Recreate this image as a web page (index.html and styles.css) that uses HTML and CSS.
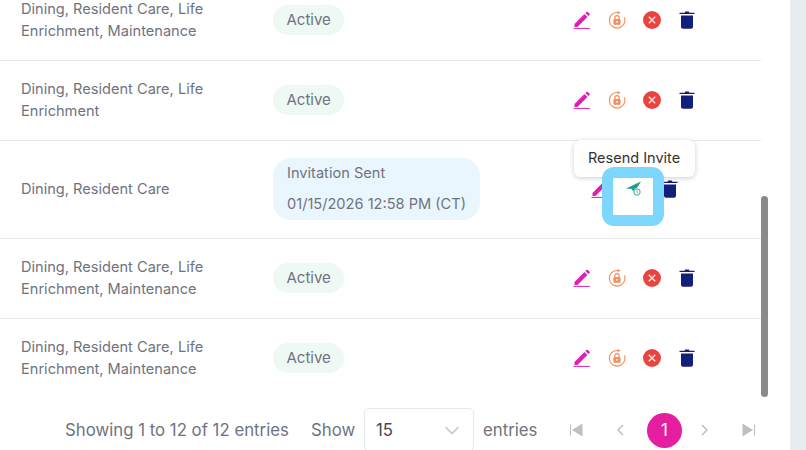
FILE: index.html
```html
<!DOCTYPE html>
<html lang="en">
<head>
    <meta charset="UTF-8">
    <meta name="viewport" content="width=device-width, initial-scale=1.0"/>
    <title>Users</title>
    <link rel="stylesheet" href="styles.css">
</head>
<body>
    <svg class="defs" width="0" height="0">
        <symbol id="i-edit" viewBox="0 0 18 18">
            <path d="M1.500 13 11.400 3.100l3 3L4.500 16H1.500z" fill="currentColor"/>
            <path d="M12.400 2.100l1.100-1.100a1 1 0 0 1 1.400 0l1.600 1.600a1 1 0 0 1 0 1.400l-1.100 1.100z" fill="currentColor"/>
            <path d="M.5 17.400h16.500" stroke="currentColor" stroke-width="1"/>
        </symbol>
        <symbol id="i-lock" viewBox="0 0 18 18">
            <path d="M16.400 6.500A7.800 7.800 0 1 1 9.800 1.500" fill="none" stroke="currentColor" stroke-width="1.100"/>
            <path d="M9.400 0 12.600 1.600 9.600 3.400z" fill="currentColor"/>
            <path d="M6.900 8V6.800a2.100 2.100 0 0 1 4.200 0V8" fill="none" stroke="currentColor" stroke-width="1.200"/>
            <rect x="5.400" y="8" width="7.200" height="5.800" rx=".8" fill="currentColor"/>
            <circle cx="9" cy="10.800" r=".9" fill="#fff"/>
        </symbol>
        <symbol id="i-close" viewBox="0 0 18 18">
            <circle cx="9" cy="9" r="9" fill="currentColor"/>
            <path d="M5.800 5.800l6.400 6.400M12.200 5.800l-6.400 6.400" stroke="#fbe3e1" stroke-width="1.400" fill="none"/>
        </symbol>
        <symbol id="i-trash" viewBox="0 0 16 18">
            <path d="M5.600 1.800 6.200.4h3.600l.6 1.400h5.100v1.100H.5V1.800z" fill="currentColor"/>
            <path d="M2 4.400h12v11.400a2 2 0 0 1-2 2H4a2 2 0 0 1-2-2z" fill="currentColor"/>
        </symbol>
        <symbol id="i-send" viewBox="0 0 18 18">
            <path d="M0 8.400 15 1.500 10.800 8 8.400 8.700 7.200 11.500 5.800 9z" fill="#1f9c8c"/>
            <circle cx="11" cy="12" r="3.200" fill="none" stroke="#1f9c8c" stroke-width=".9"/>
            <path d="M11.100 10.200v2l1.200.7" fill="none" stroke="#1f9c8c" stroke-width=".7"/>
        </symbol>
    </svg>

    <div class="page">
        <div class="content">
            <div class="rows">
                <div class="row">
                    <div class="depts">Dining, Resident Care, Life<br>Enrichment, Maintenance</div>
                    <div><span class="badge">Active</span></div>
                    <div class="actions">
                        <svg class="icon edit"><use href="#i-edit"/></svg>
                        <svg class="icon lock"><use href="#i-lock"/></svg>
                        <svg class="icon close"><use href="#i-close"/></svg>
                        <svg class="icon trash"><use href="#i-trash"/></svg>
                    </div>
                </div>
                <div class="row">
                    <div class="depts">Dining, Resident Care, Life<br>Enrichment</div>
                    <div><span class="badge">Active</span></div>
                    <div class="actions">
                        <svg class="icon edit"><use href="#i-edit"/></svg>
                        <svg class="icon lock"><use href="#i-lock"/></svg>
                        <svg class="icon close"><use href="#i-close"/></svg>
                        <svg class="icon trash"><use href="#i-trash"/></svg>
                    </div>
                </div>
                <div class="row invited">
                    <div class="depts">Dining, Resident Care</div>
                    <div>
                        <div class="invite">
                            <div>Invitation Sent</div>
                            <div>01/15/2026 12:58 PM (CT)</div>
                        </div>
                    </div>
                    <div class="actions">
                        <svg class="icon edit"><use href="#i-edit"/></svg>
                        <div class="resend">
                            <div class="tooltip">Resend Invite</div>
                            <div class="highlight"></div>
                            <svg class="icon send"><use href="#i-send"/></svg>
                        </div>
                        <svg class="icon trash"><use href="#i-trash"/></svg>
                    </div>
                </div>
                <div class="row">
                    <div class="depts">Dining, Resident Care, Life<br>Enrichment, Maintenance</div>
                    <div><span class="badge">Active</span></div>
                    <div class="actions">
                        <svg class="icon edit"><use href="#i-edit"/></svg>
                        <svg class="icon lock"><use href="#i-lock"/></svg>
                        <svg class="icon close"><use href="#i-close"/></svg>
                        <svg class="icon trash"><use href="#i-trash"/></svg>
                    </div>
                </div>
                <div class="row last">
                    <div class="depts">Dining, Resident Care, Life<br>Enrichment, Maintenance</div>
                    <div><span class="badge">Active</span></div>
                    <div class="actions">
                        <svg class="icon edit"><use href="#i-edit"/></svg>
                        <svg class="icon lock"><use href="#i-lock"/></svg>
                        <svg class="icon close"><use href="#i-close"/></svg>
                        <svg class="icon trash"><use href="#i-trash"/></svg>
                    </div>
                </div>
            </div>

            <div class="pager">
                <span class="info">Showing 1 to 12 of 12 entries</span>
                <span class="show">Show</span>
                <div class="select">
                    <span>15</span>
                    <svg class="chev" width="16" height="9" viewBox="0 0 16 9"><path d="M1.500 1.200 8 7.400l6.500-6.200" fill="none" stroke="#c9cdd2" stroke-width="1.800"/></svg>
                </div>
                <span class="entries">entries</span>
                <div class="pages">
                    <svg class="nav" width="14" height="14" viewBox="0 0 14 14"><path d="M1.500 1.500v11M13 1.500v11L4 7z" fill="#bcc0c5" stroke="#bcc0c5" stroke-width="1.100"/></svg>
                    <svg class="nav" width="14" height="14" viewBox="0 0 14 14"><path d="M10 2 5 7l5 5" fill="none" stroke="#bcc0c5" stroke-width="1.500"/></svg>
                    <span class="current">1</span>
                    <svg class="nav" width="14" height="14" viewBox="0 0 14 14"><path d="M4 2l5 5-5 5" fill="none" stroke="#bcc0c5" stroke-width="1.500"/></svg>
                    <svg class="nav" width="14" height="14" viewBox="0 0 14 14"><path d="M12.500 1.500v11M1 1.500v11L10 7z" fill="#bcc0c5" stroke="#bcc0c5" stroke-width="1.100"/></svg>
                </div>
            </div>

            <div class="thumb"></div>
        </div>
        <div class="rail"></div>
    </div>
</body>
</html>
```
FILE: styles.css
```css
html, body {
    height: 450px;
    margin: 0;
    overflow: hidden;
}
body {
    font-family: Inter, "Liberation Sans", sans-serif;
    background-color: #fff;
    color: #70737f;
}
.defs {
    display: block;
}
.page {
    display: flex;
    height: 450px;
}
.content {
    position: relative;
    width: 790px;
    overflow: hidden;
}
.rail {
    width: 16px;
    background-color: #e8edf1;
}
.rows {
    width: 761px;
    margin-top: -19px;
}
.row {
    display: grid;
    grid-template-columns: 252px 247px 229px;
    align-items: center;
    height: 80px;
    padding: 0 0 2px 21px;
    box-sizing: border-box;
    border-bottom: 1px solid #e9eaec;
    font-size: 14.6px;
    line-height: 22px;
}
.row.invited {
    height: 98px;
}
.row.last {
    border-bottom: none;
}
.badge {
    display: inline-block;
    padding: 4px 13.5px;
    border-radius: 15px;
    background-color: #edf9f2;
    font-size: 15px;
}
.invite {
    width: 207px;
    height: 62px;
    box-sizing: border-box;
    padding: 0 14px;
    border-radius: 18px;
    background-color: #eaf6fe;
    font-size: 14.6px;
    line-height: 31px;
}
.actions {
    display: flex;
    justify-content: center;
    align-items: center;
    gap: 17px;
}
.icon {
    display: block;
    width: 18px;
    height: 18px;
}
.edit { color: #e01fb0; }
.lock { color: #ec9160; }
.close { color: #e9453f; }
.trash { color: #13207a; }
.resend {
    position: relative;
    width: 18px;
    height: 18px;
}
.send {
    position: relative;
}
.tooltip {
    position: absolute;
    left: -52px;
    top: -40px;
    padding: 7.5px 14.5px;
    border-radius: 6px;
    background-color: #fffefd;
    box-shadow: 0 1px 5px rgba(0, 0, 0, 0.2);
    color: #333;
    font-size: 14.5px;
    white-space: nowrap;
}
.highlight {
    position: absolute;
    left: -24px;
    top: -13px;
    width: 40px;
    height: 37px;
    border: 11px solid #7dd6fd;
    border-radius: 12px;
    background-color: #fff;
}
.pager {
    display: flex;
    align-items: flex-start;
    padding: 9px 0 0 65px;
    font-size: 16.8px;
}
.info {
    width: 246px;
    line-height: 44px;
}
.show {
    width: 53px;
    line-height: 44px;
}
.select {
    display: flex;
    align-items: center;
    justify-content: space-between;
    width: 110px;
    height: 44px;
    box-sizing: border-box;
    padding: 0 13px 0 11px;
    border: 1px solid #e9eaec;
    border-radius: 5px;
    color: #444854;
}
.entries {
    width: 86px;
    margin-left: 9px;
    line-height: 44px;
}
.pages {
    display: flex;
    align-items: center;
    gap: 30px;
    height: 44px;
}
.current {
    width: 35px;
    height: 35px;
    margin: 0 -14px 0 -10px;
    border-radius: 50%;
    background-color: #e51ea0;
    color: #fff;
    text-align: center;
    line-height: 35px;
}
.thumb {
    position: absolute;
    left: 761px;
    top: 196px;
    width: 7px;
    height: 201px;
    border-radius: 4px;
    background-color: #8a8a8a;
}
```
